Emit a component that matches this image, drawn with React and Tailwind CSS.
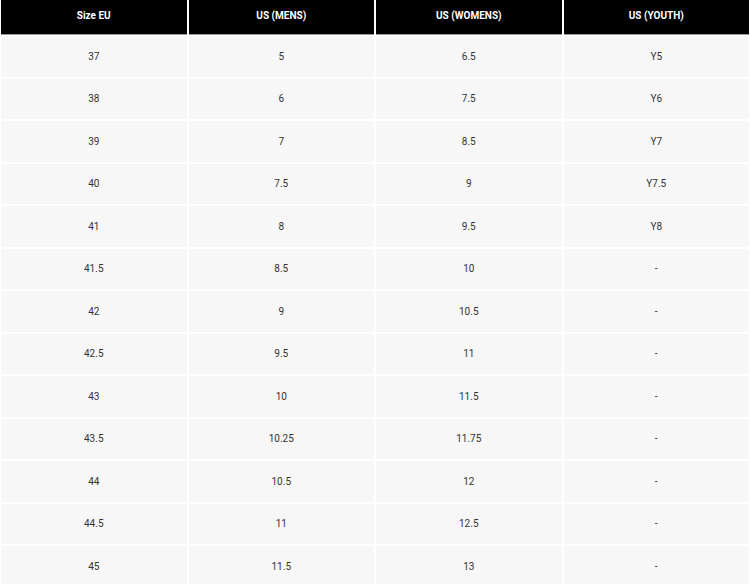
const headers = ["Size EU", "US (MENS)", "US (WOMENS)", "US (YOUTH)"];

const rows = [
  ["37", "5", "6.5", "Y5"],
  ["38", "6", "7.5", "Y6"],
  ["39", "7", "8.5", "Y7"],
  ["40", "7.5", "9", "Y7.5"],
  ["41", "8", "9.5", "Y8"],
  ["41.5", "8.5", "10", "-"],
  ["42", "9", "10.5", "-"],
  ["42.5", "9.5", "11", "-"],
  ["43", "10", "11.5", "-"],
  ["43.5", "10.25", "11.75", "-"],
  ["44", "10.5", "12", "-"],
  ["44.5", "11", "12.5", "-"],
  ["45", "11.5", "13", "-"],
];

export default function App() {
  return (
    <div className="w-[750px] h-[584px] overflow-hidden bg-white px-[1px] font-['Roboto',sans-serif]">
      {/* HEADER */}
      <div className="grid grid-cols-4 gap-x-[2px]">
        {headers.map((h) => (
          <div
            key={h}
            className="h-[35px] pb-[4px] bg-black border-b border-[#9a9a9a] text-white text-[10px] font-bold flex items-center justify-center"
          >
            {h}
          </div>
        ))}
      </div>

      {/* ROWS */}
      <div className="grid grid-cols-4 gap-[2px] mt-[1px]">
        {rows.map((row, i) =>
          row.map((cell, j) => (
            <div
              key={`${i}-${j}`}
              className="h-[40.5px] bg-[#f7f7f7] text-[#333] text-[10px] flex items-center justify-center"
            >
              {cell}
            </div>
          ))
        )}
      </div>
    </div>
  );
}
